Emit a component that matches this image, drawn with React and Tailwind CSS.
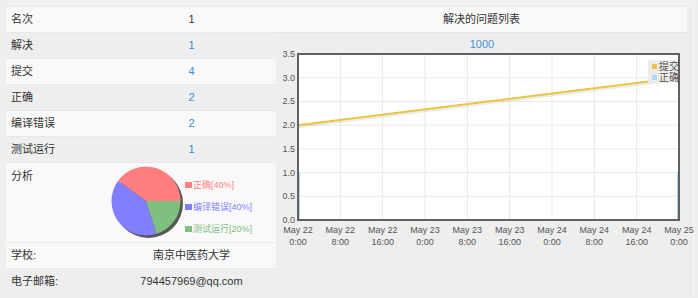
import React from 'react';

const FONT = { fontFamily: '"Liberation Sans", "Noto Sans CJK SC", Arial, sans-serif' };

const rows = [
  { label: '名次', value: '1', plain: true },
  { label: '解决', value: '1' },
  { label: '提交', value: '4' },
  { label: '正确', value: '2' },
  { label: '编译错误', value: '2' },
  { label: '测试运行', value: '1' },
];

// plot box inside the chart svg
const PL = 22;
const PR = 403;
const PT = 22;
const PB = 188;
const yOf = (v) => PB - (v * (PB - PT)) / 3.5;
const xOf = (i) => PL + (i * (PR - PL)) / 9;

const xTicks = [
  ['May 22', '0:00'],
  ['May 22', '8:00'],
  ['May 22', '16:00'],
  ['May 23', '0:00'],
  ['May 23', '8:00'],
  ['May 23', '16:00'],
  ['May 24', '0:00'],
  ['May 24', '8:00'],
  ['May 24', '16:00'],
  ['May 25', '0:00'],
];
const yTicks = ['0.0', '0.5', '1.0', '1.5', '2.0', '2.5', '3.0', '3.5'];

function LineChart() {
  return (
    <svg width="411" height="262" className="overflow-visible" style={FONT}>
      <text x="206" y="16" textAnchor="middle" fontSize="11" fill="#4a90d9">1000</text>
      <rect x={PL} y={PT} width={PR - PL} height={PB - PT} fill="#ffffff" />
      {xTicks.slice(1, 9).map((_, i) => (
        <line key={'gx' + i} x1={xOf(i + 1)} y1={PT} x2={xOf(i + 1)} y2={PB} stroke="#e9e9e9" strokeWidth="1" />
      ))}
      {yTicks.slice(1, 7).map((_, i) => (
        <line key={'gy' + i} x1={PL} y1={yOf((i + 1) * 0.5)} x2={PR} y2={yOf((i + 1) * 0.5)} stroke="#e9e9e9" strokeWidth="1" />
      ))}
      {/* 正确 series */}
      <line x1={PL + 1} y1={yOf(1)} x2={PL + 1} y2={PB} stroke="#afd8f8" strokeWidth="2" />
      <line x1={PR - 1} y1={yOf(1)} x2={PR - 1} y2={PB} stroke="#afd8f8" strokeWidth="2" />
      {/* 提交 series with shadow */}
      <line x1={PL} y1={yOf(2) + 2} x2={PR} y2={yOf(3) + 2} stroke="rgba(0,0,0,0.08)" strokeWidth="2" />
      <line x1={PL} y1={yOf(2)} x2={PR} y2={yOf(3)} stroke="#edc240" strokeWidth="2" />
      <rect x={PL} y={PT} width={PR - PL} height={PB - PT} fill="none" stroke="#606060" strokeWidth="2" />
      {yTicks.map((t, i) => (
        <text key={t} x="19" y={yOf(i * 0.5) + 3} textAnchor="end" fontSize="9" fill="#545454">{t}</text>
      ))}
      {xTicks.map(([a, b], i) => (
        <text key={i} x={xOf(i)} textAnchor="middle" fontSize="9" fill="#545454">
          <tspan x={xOf(i)} y="201">{a}</tspan>
          <tspan x={xOf(i)} y="213">{b}</tspan>
        </text>
      ))}
      {/* legend */}
      <rect x="372" y="28" width="30" height="23" fill="#ececec" opacity="0.9" />
      <rect x="375" y="31" width="7" height="7" fill="#ffffff" stroke="#cccccc" strokeWidth="0.5" />
      <rect x="376" y="32" width="5" height="5" fill="#edc240" />
      <rect x="375" y="42" width="7" height="7" fill="#ffffff" stroke="#cccccc" strokeWidth="0.5" />
      <rect x="376" y="43" width="5" height="5" fill="#afd8f8" />
      <text x="383" y="38" fontSize="10" fill="#545454">提交</text>
      <text x="383" y="49" fontSize="10" fill="#545454">正确</text>
    </svg>
  );
}

function pt(cx, cy, r, deg) {
  const a = (deg * Math.PI) / 180;
  return [cx + r * Math.cos(a), cy - r * Math.sin(a)];
}

function slice(cx, cy, r, from, to) {
  const [x1, y1] = pt(cx, cy, r, from);
  const [x2, y2] = pt(cx, cy, r, to);
  const large = to - from > 180 ? 1 : 0;
  return `M${cx},${cy} L${x1},${y1} A${r},${r} 0 ${large} 0 ${x2},${y2} Z`;
}

function PieChart() {
  const cx = 36;
  const cy = 37;
  const r = 34.5;
  return (
    <div className="flex items-start">
      <svg width="76" height="78">
        <circle cx={cx + 2.5} cy={cy + 2.5} r={r} fill="rgba(0,0,0,0.65)" />
        <path d={slice(cx, cy, r, 0, 144)} fill="#ff7f7f" />
        <path d={slice(cx, cy, r, 144, 288)} fill="#7f7fff" />
        <path d={slice(cx, cy, r, 288, 360)} fill="#7fbf7f" />
      </svg>
      <div className="ml-[-1px] mt-[15px] flex flex-col gap-[10px] text-[9px] leading-[12px]">
        <div className="flex items-center text-[#ff7f7f]">
          <span className="mr-[1px] h-[6px] w-[7px] bg-[#ff7f7f]" />正确[40%]
        </div>
        <div className="flex items-center text-[#7f7fff]">
          <span className="mr-[1px] h-[6px] w-[7px] bg-[#7f7fff]" />编译错误[40%]
        </div>
        <div className="flex items-center text-[#7fbf7f]">
          <span className="mr-[1px] h-[6px] w-[7px] bg-[#7fbf7f]" />测试运行[20%]
        </div>
      </div>
    </div>
  );
}

export default function App() {
  return (
    <div className="h-[298px] w-[698px] bg-[#eeeeee] pl-[4px] pt-[3px] text-[11px] text-[#333333]" style={FONT}>
      <div className="flex h-[294px] w-[690px] border-r border-t border-[#f6f6f6] pl-[2px] pt-[2px]">
        {/* left info table */}
        <div className="w-[270px]">
          {rows.map((r, i) => (
            <div
              key={r.label}
              className={`flex h-[26px] items-center border-t border-[#e8e8e8] ${i % 2 === 0 ? 'bg-[#f9f9f9]' : ''}`}
            >
              <div className="w-[101px] pl-[5px]">{r.label}</div>
              <div className={`flex-1 text-center ${r.plain ? 'text-[#333333]' : 'text-[#428bca]'}`}>{r.value}</div>
            </div>
          ))}
          <div className="flex h-[80px] border-t border-[#e8e8e8] bg-[#f9f9f9]">
            <div className="w-[101px] pl-[5px] pt-[7px] leading-[13px]">分析</div>
            <div className="flex-1 pl-[3px] pt-[1px]">
              <PieChart />
            </div>
          </div>
          <div className="flex h-[26px] items-center border-t border-[#e8e8e8] bg-[#f9f9f9]">
            <div className="w-[101px] pl-[5px]">学校:</div>
            <div className="flex-1 text-center">南京中医药大学</div>
          </div>
          <div className="flex h-[26px] items-center border-t border-[#e8e8e8]">
            <div className="w-[101px] pl-[5px]">电子邮箱:</div>
            <div className="flex-1 text-center">794457969@qq.com</div>
          </div>
        </div>
        {/* right chart column */}
        <div className="w-[411px]">
          <div className="flex h-[26px] items-center justify-center border-t border-[#e8e8e8] bg-[#f9f9f9] shadow-[0_1px_1px_rgba(0,0,0,0.04)]">
            解决的问题列表
          </div>
          <LineChart />
        </div>
      </div>
    </div>
  );
}
